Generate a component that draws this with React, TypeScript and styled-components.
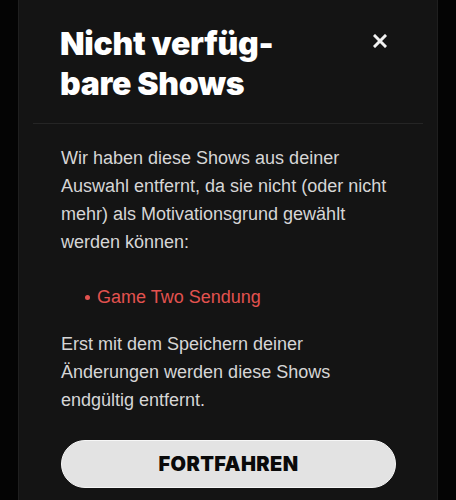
import React from 'react'
import styled, { createGlobalStyle } from 'styled-components'

const GlobalStyle = createGlobalStyle`
  html, body {
    margin: 0;
    padding: 0;
    background: #040404;
  }
  body {
    font-family: 'Liberation Sans', Arial, sans-serif;
    -webkit-font-smoothing: antialiased;
  }
`

const removedShows = ['Game Two Sendung']

export default function App() {
  return (
    <>
      <GlobalStyle />
      <Backdrop>
        <Dialog>
          <Header>
            <Title>
              Nicht verfüg-
              <br />
              bare Shows
            </Title>
            <CloseButton aria-label="Schließen">
              <svg width="14" height="14" viewBox="0 0 14 14">
                <path d="M2 2 L12 12 M12 2 L2 12" stroke="#f2f2f2" strokeWidth="3" strokeLinecap="square" />
              </svg>
            </CloseButton>
          </Header>
          <Body>
            <Text>
              Wir haben diese Shows aus deiner Auswahl entfernt, da sie nicht (oder nicht mehr) als
              Motivationsgrund gewählt werden können:
            </Text>
            <ShowList>
              {removedShows.map(show => (
                <ShowItem key={show}>{show}</ShowItem>
              ))}
            </ShowList>
            <Text>Erst mit dem Speichern deiner Änderungen werden diese Shows endgültig entfernt.</Text>
            <ContinueButton>FORTFAHREN</ContinueButton>
          </Body>
        </Dialog>
      </Backdrop>
    </>
  )
}

const Backdrop = styled.div`
  height: 500px;
  display: flex;
  justify-content: center;
  overflow: hidden;
`

const Dialog = styled.div`
  width: 420px;
  box-sizing: border-box;
  background: #141414;
  border-left: 1px solid #1f1f1f;
  border-right: 1px solid #1f1f1f;
  display: flex;
  flex-direction: column;
`

const Header = styled.div`
  margin: 0 14px;
  padding: 24px 36px 19px 27px;
  border-bottom: 1px solid #252525;
  display: flex;
  justify-content: space-between;
  align-items: flex-start;
`

const Title = styled.h2`
  margin: 0;
  font-family: Inter, 'Liberation Sans', sans-serif;
  font-weight: 900;
  font-size: 32px;
  line-height: 40px;
  letter-spacing: -0.3px;
  color: #ffffff;
`

const CloseButton = styled.button`
  appearance: none;
  background: none;
  border: 0;
  padding: 0;
  margin-top: 10px;
  width: 14px;
  height: 14px;
  display: flex;
  cursor: pointer;
`

const Body = styled.div`
  padding: 20px 41px 40px 42px;
  display: flex;
  flex-direction: column;
`

const Text = styled.p`
  margin: 0;
  font-size: 18px;
  line-height: 28px;
  color: #d6d6d6;
`

const ShowList = styled.ul`
  margin: 27px 0 19px;
  padding-left: 24px;
  list-style: none;
`

const ShowItem = styled.li`
  display: flex;
  align-items: center;
  gap: 7px;
  font-size: 18px;
  line-height: 28px;
  color: #e2524f;

  &::before {
    content: '';
    width: 5px;
    height: 5px;
    border-radius: 50%;
    background: #e2524f;
  }
`

const ContinueButton = styled.button`
  appearance: none;
  margin-top: 26px;
  height: 48px;
  width: 100%;
  border-radius: 24px;
  border: 1px solid #f6f6f6;
  background: #e3e3e3;
  color: #0a0a0a;
  font-family: Inter, 'Liberation Sans', sans-serif;
  font-weight: 900;
  font-size: 20px;
  letter-spacing: 0.4px;
  cursor: pointer;
`
